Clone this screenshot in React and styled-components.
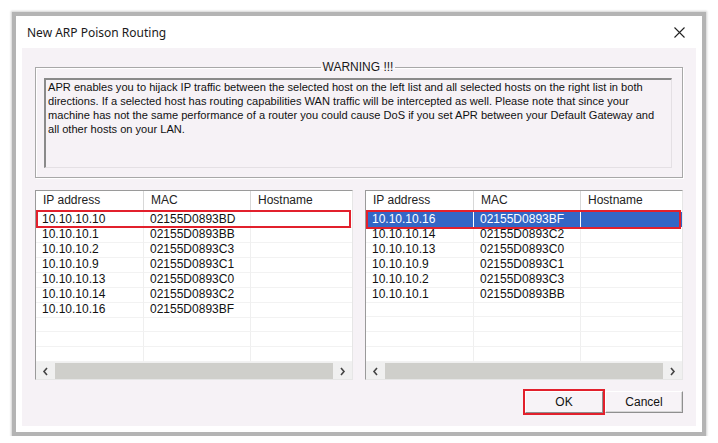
import React from "react";
import styled, { createGlobalStyle } from "styled-components";

const Global = createGlobalStyle`
  html, body { margin: 0; padding: 0; background: #ffffff; }
  body { font-family: "Liberation Sans", Arial, sans-serif; }
  * { box-sizing: border-box; }
`;

const Frame = styled.div`
  margin: 12px 0 0 12px;
  width: 694px;
  height: 424px;
  border: 4px solid #b4b4b4;
  box-shadow: 0 0 2px 1px rgba(0, 0, 0, 0.18);
  background: #ffffff;
  display: flex;
  flex-direction: column;
  padding: 0 6px 6px 6px;
`;

const TitleBar = styled.div`
  height: 32px;
  display: flex;
  align-items: center;
  margin: 0 -6px;
  padding-left: 11px;
`;

const Title = styled.div`
  flex: 1;
  font-family: "Noto Sans", "Open Sans", sans-serif;
  font-size: 12px;
  color: #1a1a1a;
`;

const CloseBox = styled.div`
  width: 46px;
  height: 32px;
  display: flex;
  align-items: center;
  justify-content: center;
`;

const Client = styled.div`
  flex: 1;
  background: #f6f2f6;
  display: flex;
  flex-direction: column;
  padding: 12px 13px 0 13px;
`;

const Group = styled.fieldset`
  margin: 0;
  padding: 4px 10px 9px 8px;
  border: 1px solid #a8a8a8;
  box-shadow: inset 1px 1px 0 #ffffff, 1px 1px 0 #ffffff;
  min-width: 0;
`;

const Legend = styled.legend`
  margin: 0 auto;
  padding: 0 2px;
  font-size: 12px;
  line-height: 14px;
  color: #1a1a1a;
`;

const Memo = styled.div`
  height: 90px;
  border-style: solid;
  border-width: 2px 1px 1px 2px;
  border-color: #8a8a8a #e4e0e4 #e4e0e4 #8a8a8a;
  padding: 0 2px;
  font-size: 11.1px;
  line-height: 14px;
  color: #111;
  white-space: nowrap;
  overflow: hidden;
`;

const Lists = styled.div`
  margin-top: 12px;
  display: flex;
  gap: 12px;
`;

const ListBox = styled.div`
  width: 318px;
  height: 190px;
  background: #ffffff;
  border-style: solid;
  border-width: 1px;
  border-color: #9a9a9a #e6e6e6 #e6e6e6 #9a9a9a;
  display: flex;
  flex-direction: column;
  overflow: hidden;
`;

const Header = styled.div`
  display: grid;
  grid-template-columns: 108px 107px 1fr;
  height: 20px;
  flex: none;
`;

const HeadCell = styled.div`
  padding-left: 7px;
  font-size: 12px;
  line-height: 19px;
  color: #222;
  border-right: 1px solid #d8d8d8;
  white-space: nowrap;
  &:last-child { border-right: none; }
`;

const Body = styled.div`
  flex: 1;
  padding-top: 1px;
`;

const Row = styled.div`
  display: grid;
  grid-template-columns: 108px 107px 1fr;
  height: 15px;
  background: ${(p) => (p.$selected ? "#3366c6" : "transparent")};
  color: ${(p) => (p.$selected ? "#ffffff" : "#111111")};
  position: relative;
  &::after {
    content: "";
    display: ${(p) => (p.$marked ? "block" : "none")};
    position: absolute;
    left: 0;
    right: 1px;
    top: -2px;
    bottom: ${(p) => (p.$selected ? "-2px" : "-1px")};
    border: 2px solid #e2202c;
    z-index: 1;
  }
`;

const Cell = styled.div`
  padding-left: 6px;
  font-size: 12px;
  line-height: 15px;
  white-space: nowrap;
  border-right: 1px solid ${(p) => (p.$selected ? "#ffffff" : "#efefef")};
  border-bottom: 1px solid ${(p) => (p.$selected ? "transparent" : "#f2f2f2")};
  &:last-child { border-right: none; }
`;

const ScrollBar = styled.div`
  height: 18px;
  flex: none;
  display: flex;
  align-items: stretch;
  background: #f0f0f0;
`;

const Arrow = styled.div`
  width: 19px;
  display: flex;
  align-items: center;
  justify-content: center;
`;

const Thumb = styled.div`
  flex: 1;
  background: #cfcfcb;
  margin: 1px 0;
`;

const Buttons = styled.div`
  margin-top: 11px;
  display: flex;
  justify-content: flex-end;
  gap: 2px;
`;

const Button = styled.div`
  width: 78px;
  height: 22px;
  background: #f7f3f7;
  border: 1px solid;
  border-color: #ffffff #8f8f8f #8f8f8f #ffffff;
  box-shadow: ${(p) => (p.$marked ? "0 0 0 2px #e2202c" : "inset -1px -1px 0 #d6d6d6")};
  display: flex;
  align-items: center;
  justify-content: center;
  font-size: 12px;
  color: #111;
`;

const Chevron = ({ dir }) => (
  <svg width="7" height="9" viewBox="0 0 7 9">
    <path
      d={dir === "left" ? "M5 1 L2 4.5 L5 8" : "M2 1 L5 4.5 L2 8"}
      fill="none"
      stroke="#444"
      strokeWidth="1.6"
    />
  </svg>
);

const CloseIcon = () => (
  <svg width="11" height="11" viewBox="0 0 11 11">
    <path d="M0.5 0.5 L10.5 10.5 M10.5 0.5 L0.5 10.5" stroke="#222" strokeWidth="1.1" />
  </svg>
);

const leftRows = [
  ["10.10.10.10", "02155D0893BD"],
  ["10.10.10.1", "02155D0893BB"],
  ["10.10.10.2", "02155D0893C3"],
  ["10.10.10.9", "02155D0893C1"],
  ["10.10.10.13", "02155D0893C0"],
  ["10.10.10.14", "02155D0893C2"],
  ["10.10.10.16", "02155D0893BF"],
];

const rightRows = [
  ["10.10.10.16", "02155D0893BF"],
  ["10.10.10.14", "02155D0893C2"],
  ["10.10.10.13", "02155D0893C0"],
  ["10.10.10.9", "02155D0893C1"],
  ["10.10.10.2", "02155D0893C3"],
  ["10.10.10.1", "02155D0893BB"],
];

function HostList({ rows, selectFirst }) {
  const filled = [...rows];
  while (filled.length < 10) filled.push(["", ""]);
  return (
    <ListBox>
      <Header>
        <HeadCell>IP address</HeadCell>
        <HeadCell>MAC</HeadCell>
        <HeadCell>Hostname</HeadCell>
      </Header>
      <Body>
        {filled.map((r, i) => {
          const sel = selectFirst && i === 0;
          return (
            <Row key={i} $selected={sel} $marked={i === 0}>
              <Cell $selected={sel}>{r[0]}</Cell>
              <Cell $selected={sel}>{r[1]}</Cell>
              <Cell $selected={sel}></Cell>
            </Row>
          );
        })}
      </Body>
      <ScrollBar>
        <Arrow><Chevron dir="left" /></Arrow>
        <Thumb />
        <Arrow><Chevron dir="right" /></Arrow>
      </ScrollBar>
    </ListBox>
  );
}

export default function App() {
  return (
    <>
      <Global />
      <Frame>
        <TitleBar>
          <Title>New ARP Poison Routing</Title>
          <CloseBox><CloseIcon /></CloseBox>
        </TitleBar>
        <Client>
          <Group>
            <Legend>WARNING !!!</Legend>
            <Memo>
              APR enables you to hijack IP traffic between the selected host on the left list and all selected hosts on the right list in both
              <br />
              directions. If a selected host has routing capabilities WAN traffic will be intercepted as well. Please note that since your
              <br />
              machine has not the same performance of a router you could cause DoS if you set APR between your Default Gateway and
              <br />
              all other hosts on your LAN.
            </Memo>
          </Group>
          <Lists>
            <HostList rows={leftRows} />
            <HostList rows={rightRows} selectFirst />
          </Lists>
          <Buttons>
            <Button $marked>OK</Button>
            <Button>Cancel</Button>
          </Buttons>
        </Client>
      </Frame>
    </>
  );
}
